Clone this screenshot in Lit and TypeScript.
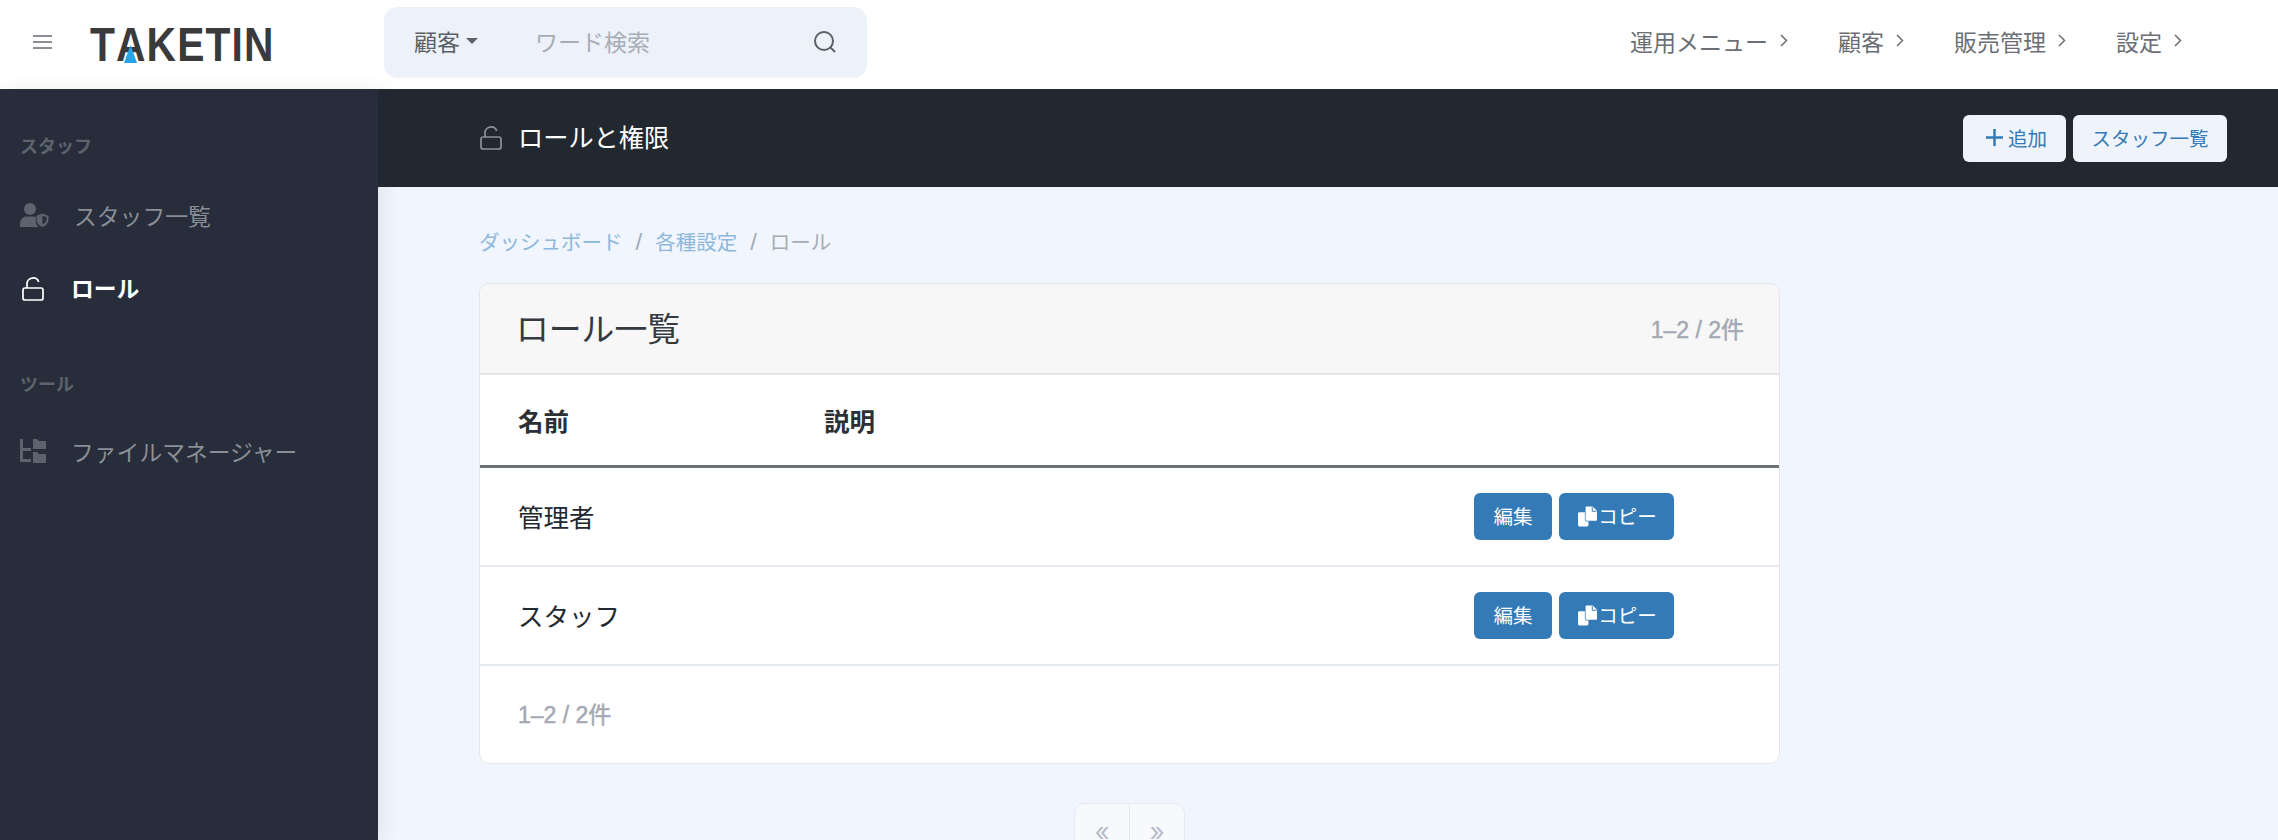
import { LitElement, html, css, svg } from 'lit';
import { customElement } from 'lit/decorators.js';

const lockIcon = svg`<path d="M3 11h16a2 2 0 0 1 2 2v8a2 2 0 0 1-2 2H3a2 2 0 0 1-2-2v-8a2 2 0 0 1 2-2zM5 11V6.800a6 5.800 0 0 1 11.700-1.800" fill="none" stroke="currentColor" stroke-width="1.700"/>`;

@customElement('app-root')
export class AppRoot extends LitElement {
  static styles = css`
    :host {
      display: block;
      width: 2278px;
      height: 840px;
      overflow: hidden;
      font-family: 'Inter', 'Noto Sans CJK JP', sans-serif;
      background: #f1f5fd;
      color: #212830;
    }
    .topbar {
      height: 89px;
      box-sizing: border-box;
      padding-bottom: 5px;
      background: #fff;
      display: flex;
      align-items: center;
    }
    .burger {
      width: 19px;
      margin-left: 33px;
      display: flex;
      flex-direction: column;
      gap: 4px;
    }
    .burger i {
      display: block;
      height: 2px;
      background: #8b8f95;
    }
    .logo {
      position: relative;
      margin: 5px 0 0 38px;
      width: 184px;
      height: 48px;
    }
    .logo b {
      display: block;
      font-family: 'Liberation Sans', sans-serif;
      font-size: 48px;
      line-height: 48px;
      font-kerning: none;
      letter-spacing: 1.300px;
      color: #3a3a3a;
      white-space: nowrap;
      transform: scaleX(0.85);
      transform-origin: left center;
    }
    .logo svg {
      position: absolute;
      left: 34px;
      top: 24px;
    }
    .search {
      margin-left: 110px;
      width: 483px;
      height: 71px;
      box-sizing: border-box;
      background: #edf1f9;
      border-radius: 14px;
      display: flex;
      align-items: center;
      padding: 0 30px;
      font-size: 23px;
    }
    .search .scope {
      color: #5b6168;
      width: 121px;
      display: flex;
      align-items: center;
      gap: 6px;
      padding-bottom: 2px;
    }
    .caret {
      width: 0;
      height: 0;
      border-left: 6px solid transparent;
      border-right: 6px solid transparent;
      border-top: 6px solid #5b6168;
    }
    .search .placeholder {
      color: #a7adb6;
      flex: 1;
      padding-bottom: 2px;
    }
    .topnav {
      margin-left: auto;
      margin-right: 96px;
      margin-bottom: 3px;
      display: flex;
      gap: 50px;
      font-size: 23px;
      color: #6b6f75;
    }
    .topnav span {
      display: flex;
      align-items: center;
      gap: 12px;
    }
    .body {
      display: flex;
      height: 751px;
    }
    .sidebar {
      width: 378px;
      flex: none;
      box-sizing: border-box;
      background: #272d3a;
      padding-top: 45px;
      position: relative;
      z-index: 1;
      box-shadow: 6px 0 16px rgba(40, 50, 80, 0.08);
    }
    .section {
      font-size: 18px;
      line-height: 26px;
      font-weight: 700;
      color: #5d626c;
      padding-left: 20px;
    }
    .section.second {
      margin-top: 46px;
    }
    .item {
      display: flex;
      align-items: center;
      height: 74px;
      font-size: 22.800px;
      color: #8a8e96;
      padding-left: 20px;
    }
    .item svg {
      flex: none;
      color: #5d626c;
    }
    .item.active {
      color: #fff;
      font-weight: 700;
    }
    .item.active svg {
      color: #fff;
    }
    .item.active span {
      margin-bottom: 3px;
    }
    .sidebar .first {
      margin-top: 18px;
    }
    .sidebar .files {
      margin-top: 16px;
    }
    .main {
      flex: 1;
      min-width: 0;
    }
    .subhead {
      height: 98px;
      box-sizing: border-box;
      background: #212830;
      display: flex;
      align-items: center;
      padding: 0 51px 0 102px;
      color: #fff;
      font-size: 25.200px;
      gap: 16px;
    }
    .subhead svg {
      color: #8d9196;
    }
    .subhead .title {
      margin-bottom: 5px;
    }
    .subhead .actions {
      margin-left: auto;
      display: flex;
      gap: 7px;
    }
    .light {
      height: 47px;
      box-sizing: border-box;
      background: #eff3fb;
      color: #337ab7;
      border-radius: 6px;
      font-size: 19.500px;
      display: flex;
      align-items: center;
      padding: 0 0 2px 23px;
      gap: 5px;
    }
    .light.add {
      width: 103px;
    }
    .light.list {
      width: 154px;
      justify-content: center;
      padding: 0 0 2px;
    }
    .content {
      padding: 39px 0 0 101px;
      width: 1301px;
    }
    .crumbs {
      display: flex;
      align-items: center;
      height: 29px;
      font-size: 20.500px;
      color: #a4acb8;
      gap: 13px;
    }
    .crumbs a {
      color: #8db8dc;
    }
    .crumbs .sep {
      font-size: 24px;
      font-family: 'Liberation Sans', sans-serif;
      margin-top: 3px;
    }
    .card {
      margin-top: 28px;
      box-sizing: border-box;
      height: 481px;
      background: #fff;
      border: 1px solid #e2e5eb;
      border-radius: 10px;
      overflow: hidden;
    }
    .card-head {
      height: 91px;
      box-sizing: border-box;
      background: #f7f7f8;
      border-bottom: 2px solid #e2e5e9;
      display: flex;
      align-items: center;
      justify-content: space-between;
      padding: 0 35px 0 36px;
      font-size: 32.800px;
      color: #343a40;
    }
    .card-head .heading {
      margin-bottom: 4px;
    }
    .count {
      font-family: 'Liberation Sans', 'Noto Sans CJK JP', sans-serif;
      font-size: 23px;
      -webkit-text-stroke: 0.500px #a4a9b4;
      color: #a4a9b4;
    }
    .card-head .count {
      margin-bottom: 2px;
    }
    .row {
      display: flex;
      align-items: center;
      box-sizing: border-box;
      padding-left: 38px;
      font-size: 25.500px;
      color: #212830;
    }
    .row.header {
      height: 93px;
      font-weight: 700;
      border-bottom: 3px solid #6c707a;
      color: #2c2f33;
      padding-bottom: 2px;
    }
    .row.header .name {
      width: 306px;
    }
    .row.data {
      height: 99px;
      border-bottom: 2px solid #e5e9f0;
    }
    .row.data .name {
      width: 956px;
      margin-bottom: 3px;
    }
    .btn {
      height: 47px;
      box-sizing: border-box;
      background: #347ab7;
      color: #fff;
      border-radius: 6px;
      font-size: 19.500px;
      display: flex;
      align-items: center;
      justify-content: center;
      padding-bottom: 2px;
    }
    .btn.edit {
      width: 78px;
    }
    .btn.copy {
      width: 115px;
      margin-left: 7px;
      gap: 1px;
      padding-left: 2px;
    }
    .btn.copy svg {
      margin-top: 2px;
    }
    .card-foot {
      padding: 30px 38px;
    }
    .pager {
      margin: 39px 0 0 595px;
      width: 111px;
      height: 60px;
      box-sizing: border-box;
      display: flex;
      background: #f7f9fd;
      border: 1px solid #e6e9f0;
      border-radius: 10px;
      color: #b8bdc7;
      font-size: 26px;
    }
    .pager span {
      flex: 1;
      text-align: center;
      padding-top: 12px;
    }
    .pager span + span {
      border-left: 1px solid #e6e9f0;
    }
  `;

  chevron() {
    return html`<svg width="8" height="13" viewBox="0 0 8 13"><path d="M1 1l5.500 5.500L1 12" fill="none" stroke="#6b6f75" stroke-width="1.500"/></svg>`;
  }

  dataRow(name: string) {
    return html`
      <div class="row data">
        <div class="name">${name}</div>
        <div class="btn edit">編集</div>
        <div class="btn copy">
          <svg width="19" height="21" viewBox="0 0 20 21" fill="#fff">
            <path d="M1.500 6H11v13.500a1.500 1.500 0 0 1-1.500 1.500h-8A1.500 1.500 0 0 1 0 19.500v-12A1.500 1.500 0 0 1 1.500 6z"/>
            <path d="M9 0h6.500L20 4.500V14a1 1 0 0 1-1 1H9a1 1 0 0 1-1-1V1a1 1 0 0 1 1-1z" stroke="#347ab7" stroke-width="1.500" paint-order="stroke"/>
            <path d="M15 .5v4.500h4.500" fill="none" stroke="#347ab7" stroke-width="1"/>
          </svg>コピー
        </div>
      </div>
    `;
  }

  render() {
    return html`
      <div class="topbar">
        <div class="burger"><i></i><i></i><i></i></div>
        <div class="logo">
          <b>TAKETIN</b>
          <svg width="13" height="18" viewBox="0 0 13 18"><path d="M6.500 0L13 18H0z" fill="#27a3e8"/></svg>
        </div>
        <div class="search">
          <div class="scope">顧客<span class="caret"></span></div>
          <div class="placeholder">ワード検索</div>
          <svg width="24" height="24" viewBox="0 0 24 24" fill="none" stroke="#5b6168" stroke-width="2">
            <circle cx="11" cy="11" r="9"/><path d="M17.500 17.500L22 22"/>
          </svg>
        </div>
        <div class="topnav">
          <span>運用メニュー${this.chevron()}</span>
          <span>顧客${this.chevron()}</span>
          <span>販売管理${this.chevron()}</span>
          <span>設定${this.chevron()}</span>
        </div>
      </div>
      <div class="body">
        <aside class="sidebar">
          <div class="section">スタッフ</div>
          <div class="item first">
            <svg width="29" height="24" viewBox="0 0 29 24" style="margin-right:25px" fill="currentColor">
              <circle cx="10" cy="6" r="6"/>
              <path d="M0 24v-3c0-5 3-7.500 7-7.500h6c1 0 2 .1 2.800.4v4.100c0 2 .8 4.500 2.700 6z"/>
              <path d="M22.500 10.500l6 2.200v3.800c0 3.500-2.700 6-6 7.500-3.300-1.500-6-4-6-7.500v-3.800zm0 2.200v8.800c2-1 4-2.800 4-5v-2.400z" fill-rule="evenodd"/>
            </svg>スタッフ一覧
          </div>
          <div class="item active">
            <svg width="22" height="24" viewBox="0 0 22 24" style="margin:0 27px 0 2px">${lockIcon}</svg><span>ロール</span>
          </div>
          <div class="section second">ツール</div>
          <div class="item files">
            <svg width="26" height="24" viewBox="0 0 26 24" style="margin-right:25px" fill="currentColor">
              <path d="M0 0h3v9h8v3H3v8h8v3H0z"/>
              <path d="M13 0h4l2 2h7v8H13z"/>
              <path d="M13 13h4l2 2h7v9H13z"/>
            </svg>ファイルマネージャー
          </div>
        </aside>
        <main class="main">
          <div class="subhead">
            <svg width="22" height="24" viewBox="0 0 22 24">${lockIcon}</svg>
            <div class="title">ロールと権限</div>
            <div class="actions">
              <div class="light add">
                <svg width="17" height="17" viewBox="0 0 17 17"><path d="M8.500 0v17M0 8.500h17" stroke="#337ab7" stroke-width="2.500"/></svg>追加
              </div>
              <div class="light list">スタッフ一覧</div>
            </div>
          </div>
          <div class="content">
            <div class="crumbs">
              <a>ダッシュボード</a><span class="sep">/</span><a>各種設定</a><span class="sep">/</span><span>ロール</span>
            </div>
            <div class="card">
              <div class="card-head"><span class="heading">ロール一覧</span><span class="count">1–2 / 2件</span></div>
              <div class="row header"><div class="name">名前</div><div>説明</div></div>
              ${this.dataRow('管理者')}
              ${this.dataRow('スタッフ')}
              <div class="card-foot"><span class="count">1–2 / 2件</span></div>
            </div>
            <div class="pager"><span>«</span><span>»</span></div>
          </div>
        </main>
      </div>
    `;
  }
}
